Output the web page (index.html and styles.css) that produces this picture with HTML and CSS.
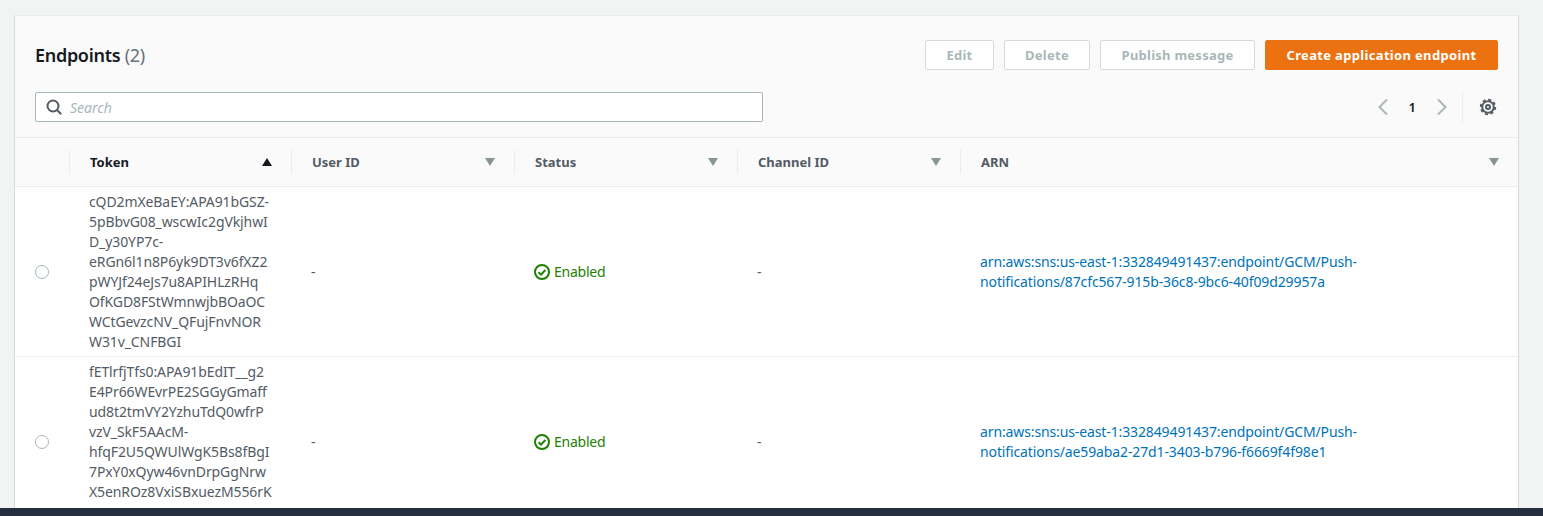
FILE: index.html
```html
<!DOCTYPE html>
<html lang="en">
<head>
    <meta charset="UTF-8">
    <meta name="viewport" content="width=device-width, initial-scale=1.0">
    <title>Endpoints</title>
    <link rel="stylesheet" href="styles.css">
</head>
<body>
    <main class="content">
        <section class="panel">
            <header class="panel-head">
                <div class="title-row">
                    <h2 class="title">Endpoints <span class="count">(2)</span></h2>
                    <div class="actions">
                        <button class="btn btn-edit" disabled>Edit</button>
                        <button class="btn btn-delete" disabled>Delete</button>
                        <button class="btn btn-publish" disabled>Publish message</button>
                        <button class="btn btn-primary">Create application endpoint</button>
                    </div>
                </div>
                <div class="tools-row">
                    <div class="search">
                        <svg class="search-icon" width="16" height="16" viewBox="0 0 16 16"><circle cx="7" cy="7" r="5.5"/><path d="M11 11l4.2 4.2"/></svg>
                        <span class="search-text">Search</span>
                    </div>
                    <div class="pager">
                        <svg class="chev" width="12" height="18" viewBox="0 0 12 18"><path d="M10 1.5L2.5 9l7.5 7.5"/></svg>
                        <span class="page-num">1</span>
                        <svg class="chev" width="12" height="18" viewBox="0 0 12 18"><path d="M2 1.5L9.5 9 2 16.5"/></svg>
                    </div>
                    <div class="settings">
                        <svg class="gear" width="18" height="18" viewBox="0 0 18 18"><circle class="gear-teeth" cx="9" cy="9" r="7.2"/><circle cx="9" cy="9" r="5.8"/><circle cx="9" cy="9" r="2"/></svg>
                    </div>
                </div>
            </header>

            <div class="row head-row">
                <div class="cell"></div>
                <div class="cell th th-sorted"><span class="th-in">Token <i class="caret caret-up"></i></span></div>
                <div class="cell th"><span class="th-in">User ID <i class="caret"></i></span></div>
                <div class="cell th"><span class="th-in">Status <i class="caret"></i></span></div>
                <div class="cell th"><span class="th-in">Channel ID <i class="caret"></i></span></div>
                <div class="cell th"><span class="th-in">ARN <i class="caret"></i></span></div>
            </div>

            <div class="row body-row">
                <div class="cell radio-cell"><span class="radio"></span></div>
                <div class="cell token">cQD2mXeBaEY:APA91bGSZ-<br>5pBbvG08_wscwIc2gVkjhwI<br>D_y30YP7c-<br>eRGn6l1n8P6yk9DT3v6fXZ2<br>pWYJf24eJs7u8APIHLzRHq<br>OfKGD8FStWmnwjbBOaOC<br>WCtGevzcNV_QFujFnvNOR<br>W31v_CNFBGI</div>
                <div class="cell">-</div>
                <div class="cell status">
                    <svg class="ok" width="16" height="16" viewBox="0 0 16 16"><circle cx="8" cy="8" r="7"/><path d="M4.6 8.2l2.4 2.4 4.4-4.6"/></svg>
                    <span>Enabled</span>
                </div>
                <div class="cell">-</div>
                <div class="cell"><a class="link" href="#">arn:aws:sns:us-east-1:332849491437:endpoint/GCM/Push-<br>notifications/87cfc567-915b-36c8-9bc6-40f09d29957a</a></div>
            </div>

            <div class="row body-row">
                <div class="cell radio-cell"><span class="radio"></span></div>
                <div class="cell token">fETlrfjTfs0:APA91bEdIT__g2<br>E4Pr66WEvrPE2SGGyGmaff<br>ud8t2tmVY2YzhuTdQ0wfrP<br>vzV_SkF5AAcM-<br>hfqF2U5QWUlWgK5Bs8fBgI<br>7PxY0xQyw46vnDrpGgNrw<br>X5enROz8VxiSBxuezM556rK<br>&nbsp;</div>
                <div class="cell">-</div>
                <div class="cell status">
                    <svg class="ok" width="16" height="16" viewBox="0 0 16 16"><circle cx="8" cy="8" r="7"/><path d="M4.6 8.2l2.4 2.4 4.4-4.6"/></svg>
                    <span>Enabled</span>
                </div>
                <div class="cell">-</div>
                <div class="cell"><a class="link" href="#">arn:aws:sns:us-east-1:332849491437:endpoint/GCM/Push-<br>notifications/ae59aba2-27d1-3403-b796-f6669f4f98e1</a></div>
            </div>
        </section>
    </main>
    <footer class="footer"></footer>
</body>
</html>
```

FILE: styles.css
```css
html, body {
    margin: 0;
    height: 100%;
    overflow: hidden;
}

body {
    display: flex;
    flex-direction: column;
    background-color: #f2f3f3;
    font-family: "Noto Sans", Arial, sans-serif;
    font-size: 14px;
    line-height: 20px;
    color: #545b64;
}

.content {
    flex: 1;
    min-height: 0;
    overflow: hidden;
    padding: 15px 24px 0 14px;
}

.footer {
    height: 8px;
    background-color: #232f3e;
}

.panel {
    background-color: #fff;
    border-left: 1px solid #d5dbdb;
    border-right: 1px solid #d5dbdb;
    border-top: 1px solid #eaeded;
}

.panel-head {
    background-color: #fafafa;
    padding: 24px 20px 15px 20px;
    border-bottom: 1px solid #eaeded;
}

.title-row {
    display: flex;
    justify-content: space-between;
    align-items: center;
    height: 30px;
}

.title {
    margin: 0;
    font-size: 18px;
    font-weight: 600;
    line-height: 30px;
    letter-spacing: -0.3px;
    color: #16191f;
}

.count {
    font-weight: 400;
    color: #687078;
}

.actions {
    display: flex;
    gap: 10px;
}

.btn {
    height: 30px;
    padding: 0;
    font-family: inherit;
    font-size: 13px;
    font-weight: 700;
    letter-spacing: 0.25px;
    border-radius: 2px;
    border: 1px solid #d5dbdb;
    background-color: #fff;
    color: #aab7b8;
}

.btn-edit { width: 69px; }
.btn-delete { width: 86px; }
.btn-publish { width: 155px; }

.btn-primary {
    width: 233px;
    letter-spacing: 0.33px;
    border-color: #ec7211;
    background-color: #ec7211;
    color: #fff;
}

.tools-row {
    display: flex;
    align-items: center;
    margin-top: 22px;
    height: 30px;
}

.search {
    display: flex;
    align-items: center;
    box-sizing: border-box;
    width: 728px;
    height: 30px;
    padding-left: 10px;
    background-color: #fff;
    border: 1px solid #aab7b8;
    border-radius: 2px;
}

.search-icon {
    fill: none;
    stroke: #545b64;
    stroke-width: 2;
}

.search-text {
    margin-left: 8px;
    padding-top: 1px;
    font-size: 14px;
    font-style: italic;
    color: #aab7b8;
}

.pager {
    display: flex;
    align-items: center;
    margin-left: auto;
    gap: 20px;
    padding-right: 14px;
}

.chev {
    fill: none;
    stroke: #aab7b8;
    stroke-width: 2;
}

.page-num {
    font-size: 13px;
    font-weight: 600;
    color: #16191f;
}

.settings {
    display: flex;
    align-items: center;
    height: 30px;
    padding-left: 16px;
    margin-right: 1px;
    border-left: 1px solid #eaeded;
}

.gear {
    fill: none;
    stroke: #545b64;
    stroke-width: 2;
}

.gear-teeth {
    stroke-dasharray: 3 2.65;
}

.row {
    display: grid;
    grid-template-columns: 54px 222px 223px 223px 223px 1fr;
}

.head-row {
    height: 48px;
    align-items: center;
    background-color: #fafafa;
    border-bottom: 1px solid #eaeded;
}

.th {
    height: 24px;
    border-left: 1px solid #eaeded;
    font-size: 13px;
    font-weight: 700;
    line-height: 24px;
    color: #545b64;
}

.th-sorted {
    color: #16191f;
}

.th-in {
    display: flex;
    justify-content: space-between;
    align-items: center;
    padding: 0 19px 0 20px;
}

.caret {
    width: 0;
    height: 0;
    border-left: 5px solid transparent;
    border-right: 5px solid transparent;
    border-top: 8px solid #879596;
}

.caret-up {
    border-top: 0;
    border-bottom: 8px solid #16191f;
}

.body-row {
    align-items: center;
    border-bottom: 1px solid #eaeded;
}

.body-row > .cell {
    padding: 5px 20px 4px;
}

.body-row > .radio-cell {
    padding: 0 0 0 20px;
    display: flex;
}

.radio {
    box-sizing: border-box;
    width: 14px;
    height: 14px;
    border: 1.5px solid #aab7b8;
    border-radius: 50%;
    background-color: #fff;
}

.token {
    letter-spacing: -0.1px;
    white-space: nowrap;
}

.status {
    display: flex;
    align-items: center;
    gap: 4px;
    letter-spacing: -0.25px;
    color: #1d8102;
}

.ok {
    fill: none;
    stroke: #1d8102;
    stroke-width: 2;
}

.link {
    letter-spacing: -0.12px;
    color: #0073bb;
    text-decoration: none;
    white-space: nowrap;
}
```
